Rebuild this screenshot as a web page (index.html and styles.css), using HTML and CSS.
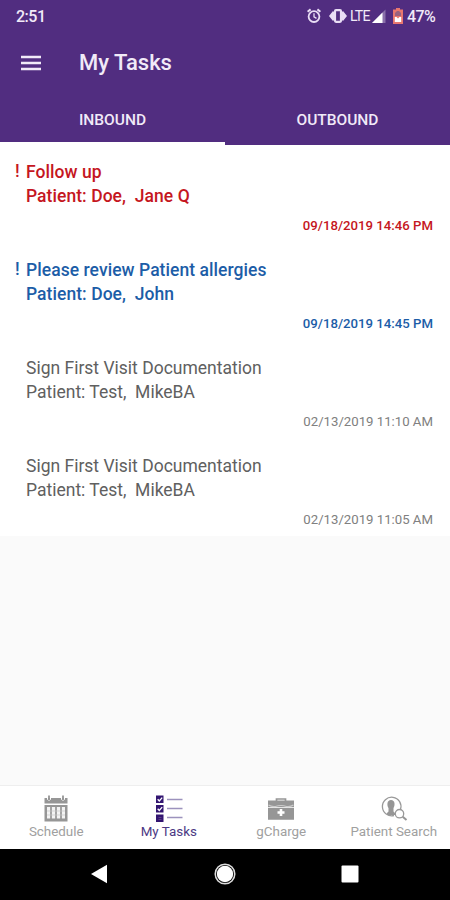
FILE: index.html
```html
<!DOCTYPE html>
<html lang="en">
<head>
<meta charset="utf-8">
<title>My Tasks</title>
<link rel="stylesheet" href="styles.css">
</head>
<body>
<div class="screen">
  <header class="header">
    <div class="status">
      <span class="clock">2:51</span>
      <svg class="alarm" width="14" height="16" viewBox="0 0 14 16" fill="none" stroke="#e9def5"><circle cx="7" cy="8.6" r="5.4" stroke-width="1.8"/><path d="M.6 3.800 3.600 1.400M13.400 3.800 10.400 1.400" stroke-width="2"/><path d="M7 5.300v3.500l2.500 1.600" stroke-width="1.300"/></svg>
      <svg class="vibrate" width="18" height="14" viewBox="0 0 18 14"><path d="M0 7 3.200 3v8zM18 7l-3.200-4v8zM3.200 2.500H5v9H3.200zM13 2.500h1.800v9H13z" fill="#e9def5"/><rect x="6" y="1.200" width="6" height="11.600" rx="1" fill="none" stroke="#e9def5" stroke-width="2.200"/></svg>
      <span class="lte">LTE</span>
      <svg class="signal" width="14" height="14" viewBox="0 0 14 14"><path d="M0 14 13.500.5V14z" fill="#8a70aa"/><path d="M0 14 10.500 3.500V14z" fill="#fff"/></svg>
      <svg class="battery" width="10" height="16" viewBox="0 0 10 16"><path d="M3 0h4v1.500h3V16H0V1.500h3z" fill="#e8776f"/><path d="M2 8V5l2-2h2l2 2v3z" fill="#99627f"/><path d="M1.800 9h1.700l1.500 1.500L6.500 9h1.700v5H1.800z" fill="#fff"/></svg>
      <span class="percent">47%</span>
    </div>
    <div class="appbar">
      <svg width="20" height="16" viewBox="0 0 20 16"><path d="M0 2h20M0 8h20M0 14h20" stroke="#f1eaf8" stroke-width="2.400"/></svg>
      <h1>My Tasks</h1>
    </div>
    <nav class="tabs"><span class="tab active"><b>INBOUND</b></span><span class="tab"><b>OUTBOUND</b></span></nav>
  </header>
  <main class="list">
    <article class="task urgent red">
      <i class="mark">!</i>
      <p>Follow up</p><p>Patient: Doe,&nbsp; Jane Q</p>
      <time>09/18/2019 14:46 PM</time>
    </article>
    <article class="task urgent blue">
      <i class="mark">!</i>
      <p>Please review Patient allergies</p><p>Patient: Doe,&nbsp; John</p>
      <time>09/18/2019 14:45 PM</time>
    </article>
    <article class="task">
      <p>Sign First Visit Documentation</p><p>Patient: Test,&nbsp; MikeBA</p>
      <time>02/13/2019 11:10 AM</time>
    </article>
    <article class="task">
      <p>Sign First Visit Documentation</p><p>Patient: Test,&nbsp; MikeBA</p>
      <time>02/13/2019 11:05 AM</time>
    </article>
  </main>
  <nav class="bottom">
    <a class="item"><svg width="28" height="28" viewBox="0 0 28 28"><path d="M2.500 3h23v5.500h-23zM2.500 10h23v16.500h-23z" fill="#969696"/><path d="M5 12h18v11.500H5z" fill="#f3f3f3"/><path d="M9 12v12M14 12v12M19 12v12" stroke="#969696" stroke-width="1.700"/><path d="M5 16h18M5 20h18" stroke="#c7c7c7" stroke-width=".7"/><path d="M5.500 0v4.500q1.500 1.500 3 0V0M19.500 0v4.500q1.500 1.500 3 0V0" fill="none" stroke="#fff"/><path d="M7 .500V5M21 .500V5" stroke="#969696" stroke-width="1.800"/></svg><span>Schedule</span></a>
    <a class="item current"><svg width="28" height="28" viewBox="0 0 28 28"><path d="M1 .500h7.500V8H1zM1 10h7.500v7.500H1zM1 19.500h7.500V27H1z" fill="#321571"/><path d="M2.700 4.200 4.300 6l2.900-3.400M2.700 13.700l1.600 1.800 2.900-3.400" fill="none" stroke="#fff" stroke-width="1.300"/><path d="M3.500 22.500h3M3.500 24.500h3" stroke="#70528f" stroke-width=".7"/><path d="M12 4.500h15.500M12 13.500h15.500M12 22.500h15.500" stroke="#9c92bd" stroke-width="1.400"/></svg><span>My Tasks</span></a>
    <a class="item"><svg width="28" height="28" viewBox="0 0 28 28"><path d="M9.500 7V4h9v3" fill="none" stroke="#969696" stroke-width="1.700"/><path d="M1 5.500h26v6.500H1zM1 12.700h26v12H1z" fill="#969696"/><path d="M1.500 10q3 2 7 1.500 5.500-2 11 0 4 .500 7-1.500" fill="none" stroke="#ccc" stroke-width="1.200"/><path d="M14 14v7M10.500 17.500h7" stroke="#fff" stroke-width="2.600"/></svg><span>gCharge</span></a>
    <a class="item"><svg width="28" height="28" viewBox="0 0 28 28" fill="none"><path d="M14 20.500a9.300 9.300 0 1 1 6.500-6" stroke="#999" stroke-width="1.300"/><path d="M11 5c4.200 0 4.200 5.500 2.500 8v3.500l1.500 1.500v2H7v-2l1.500-1.500V13C6.800 10.500 6.800 5 11 5z" fill="#969696"/><circle cx="19.500" cy="18.700" r="4.200" fill="#fff" stroke="#999" stroke-width="1.300"/><path d="m22.700 21.700 3.800 3.200" stroke="#969696" stroke-width="2"/></svg><span>Patient Search</span></a>
  </nav>
  <footer class="system">
    <svg width="16" height="20" viewBox="0 0 16 20"><path d="M0 10 16 .800v18.400z" fill="#fff"/></svg>
    <svg width="22" height="22" viewBox="0 0 22 22"><circle cx="11" cy="11" r="9.800" fill="#000" stroke="#ddd" stroke-width="1.500"/><circle cx="11" cy="11" r="8.200" fill="#fff"/></svg>
    <svg width="18" height="18" viewBox="0 0 18 18"><rect x=".5" y=".5" width="17" height="17" rx="1" fill="#fff"/></svg>
  </footer>
</div>
</body>
</html>
```
FILE: styles.css
```css
* { box-sizing: border-box; }
body { margin: 0; font-family: Roboto, sans-serif; }
svg { display: block; flex: none; }
.screen { width: 450px; height: 900px; display: flex; flex-direction: column; background: #fafafa; overflow: hidden; }
.header { height: 145px; flex: none; background: #512d80; color: #f1eaf8; }
.status { height: 32px; display: flex; align-items: center; padding: 0 15px 0 16px; font-size: 16px; font-weight: 500; white-space: nowrap; }
.clock { margin-right: auto; letter-spacing: -.5px; }
.alarm { margin-right: 8px; }
.vibrate { margin-right: 3px; }
.lte { width: 20px; font-size: 14px; font-weight: 400; letter-spacing: -.8px; margin-right: 2px; }
.signal { margin-right: 7px; }
.battery { margin-right: 4px; }
.percent { width: 28px; letter-spacing: -.6px; }
.appbar { height: 61px; display: flex; align-items: center; gap: 38px; padding: 0 0 0 21px; }
h1 { margin: 0; font-size: 22px; line-height: 28px; font-weight: 500; }
.tabs { display: grid; grid-template-columns: 1fr 1fr; height: 52px; }
.tab { display: flex; justify-content: center; align-items: center; border-bottom: 0 solid #fff; padding-top: 2px; font-size: 15.500px; }
.tab.active { border-bottom-width: 3px; padding-top: 5px; }
.tab b { font-weight: 500; }
.list { flex: none; background: #fff; }
.task { position: relative; height: 98px; padding: 15px 17px 0 26px; color: #606060; font-size: 17.500px; display: flex; flex-direction: column; }
.task:last-child { height: 97px; }
.task p { margin: 0; line-height: 24px; white-space: nowrap; }
.task time { align-self: flex-end; margin-top: 10px; line-height: 16px; font-size: 13.200px; color: #808080; }
.mark { position: absolute; left: 15px; top: 14px; font-style: normal; line-height: 24px; }
.urgent { font-weight: 500; letter-spacing: .05px; }
.urgent time { letter-spacing: 0; }
.red, .red time { color: #c51621; }
.blue, .blue time { color: #1c5da7; }
.bottom { margin-top: auto; height: 64px; flex: none; display: grid; grid-template-columns: repeat(4, 1fr); background: #fff; border-top: 1px solid #eee; }
.item { display: flex; flex-direction: column; align-items: center; padding-top: 9px; color: #a0a0a0; font-size: 13.400px; line-height: 16px; gap: 1px; white-space: nowrap; }
.current { color: #4c3984; }
.system { height: 51px; flex: none; display: flex; align-items: center; justify-content: space-between; padding: 0 91px 2px; background: #000; }
.system svg:nth-child(2) { margin-left: 2px; }
```
